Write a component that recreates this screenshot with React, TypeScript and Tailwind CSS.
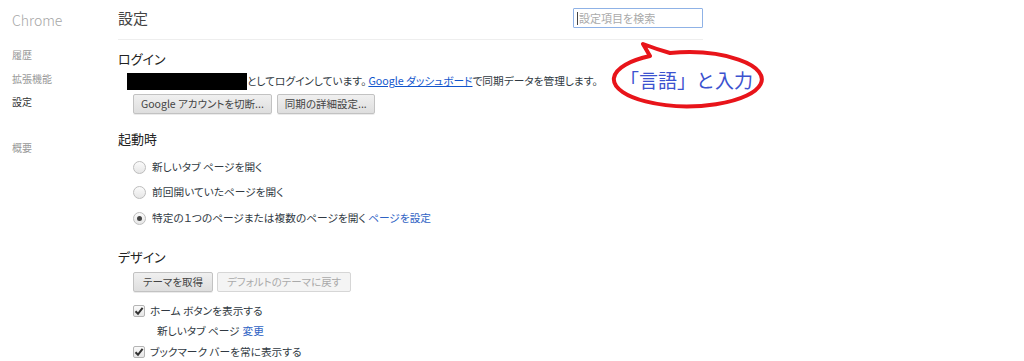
import React from 'react';

const jp = "font-['Noto_Sans_CJK_JP','Noto_Sans',sans-serif] [font-feature-settings:'palt']";

function Radio({ checked }: { checked?: boolean }) {
  return (
    <span className="w-[13px] h-[13px] rounded-full border border-[#bdbdbd] bg-gradient-to-b from-[#fbfbfb] to-[#e6e6e6] flex items-center justify-center shrink-0">
      {checked && <span className="w-[5px] h-[5px] rounded-full bg-[#444]" />}
    </span>
  );
}

function Check() {
  return (
    <span className="w-[12px] h-[12px] rounded-[2px] border border-[#b4b4b4] bg-gradient-to-b from-[#fafafa] to-[#e6e6e6] flex items-center justify-center shrink-0">
      <svg width="10" height="10" viewBox="0 0 10 10">
        <path d="M1.5 5.2 L4 7.8 L8.6 1.8" fill="none" stroke="#333" strokeWidth="2" />
      </svg>
    </span>
  );
}

function Btn({ children, disabled, tight }: { children: React.ReactNode; disabled?: boolean; tight?: boolean }) {
  const pad = tight ? 'px-[7px]' : 'px-[9px]';
  return (
    <button
      className={
        disabled
          ? `h-[20px] ${pad} border border-[#d6d6d6] rounded-[2px] bg-[#f4f4f4] text-[#aaa] text-[10.5px] leading-none`
          : `h-[20px] ${pad} border border-[#c2c2c2] rounded-[2px] bg-gradient-to-b from-[#f0f0f0] to-[#dedede] text-[#444] text-[10.5px] leading-none shadow-[0_1px_0_rgba(0,0,0,0.08)]`
      }
    >
      {children}
    </button>
  );
}

export default function App() {
  return (
    <div className={`relative w-[1024px] h-[361px] overflow-hidden bg-white text-[#303942] ${jp}`}>
      <div className="flex">
        {/* sidebar */}
        <div className="w-[118px] shrink-0 pl-[12px]">
          <div className="h-[40px] flex items-center text-[14px] text-[#a6a6a6] font-light">Chrome</div>
          <div className="text-[10px] text-[#999]">
            <div className="h-[20px] mt-[4px] flex items-center">履歴</div>
            <div className="h-[20px] mt-[4px] flex items-center">拡張機能</div>
            <div className="h-[20px] mt-[3px] flex items-center text-[#333]">設定</div>
            <div className="h-[20px] mt-[26px] flex items-center">概要</div>
          </div>
        </div>

        {/* main */}
        <div className="flex-1">
          <div className="w-[585px] h-[40px] border-b border-[#eee] flex items-center justify-between">
            <span className="text-[15px] text-[#444] -mt-[2px]">設定</span>
            <div className="w-[130px] h-[20px] mb-[3px] border border-[#8fb2e6] rounded-[1px] flex items-center pl-[3px] text-[11px] text-[#aaa]">
              <span className="w-px h-[13px] bg-[#444] mr-px" />
              設定項目を検索
            </div>
          </div>

          <div className="h-[20px] mt-[9px] flex items-center text-[13px] text-[#222]">ログイン</div>
          <div className="h-[18px] mt-[3px] flex items-center text-[10.7px]">
            <span className="ml-[9px] w-[120px] h-[17px] bg-black" />
            <span>としてログインしています。</span>
            <span className="text-[#1155cc] underline ml-[2px]">Google ダッシュボード</span>
            <span>で同期データを管理します。</span>
          </div>
          <div className="mt-[4px] ml-[15px] flex gap-[5px]">
            <Btn tight>Google アカウントを切断...</Btn>
            <Btn tight>同期の詳細設定...</Btn>
          </div>

          <div className="h-[20px] mt-[15px] flex items-center text-[13px] text-[#222]">起動時</div>
          <div className="mt-[6px] ml-[15px] text-[10.7px]">
            <div className="h-[25px] flex items-center gap-[6px]"><Radio /><span>新しいタブ ページを開く</span></div>
            <div className="h-[25px] flex items-center gap-[6px]"><Radio /><span>前回開いていたページを開く</span></div>
            <div className="h-[26px] flex items-center gap-[6px]">
              <Radio checked />
              <span>特定の１つのページまたは複数のページを開く <span className="text-[#2f63c4]">ページを設定</span></span>
            </div>
          </div>

          <div className="h-[20px] mt-[16px] flex items-center text-[13px] text-[#222]">デザイン</div>
          <div className="mt-[5px] ml-[15px] flex gap-[4px]">
            <Btn>テーマを取得</Btn>
            <Btn disabled>デフォルトのテーマに戻す</Btn>
          </div>
          <div className="mt-[9px] ml-[15px] text-[10.7px]">
            <div className="h-[20px] flex items-center gap-[5px]"><Check /><span>ホーム ボタンを表示する</span></div>
            <div className="h-[21px] flex items-center pl-[24px]">新しいタブ ページ <span className="text-[#2f63c4] ml-[3px]">変更</span></div>
            <div className="h-[20px] flex items-center gap-[5px]"><Check /><span>ブックマーク バーを常に表示する</span></div>
          </div>
        </div>
      </div>

      {/* annotation overlay */}
      <svg className="absolute left-0 top-0 pointer-events-none" width="1024" height="361">
        <path
          d="M650 56 L643 44 Q656 49 670 53 A74 27 0 1 1 650 56 Z"
          fill="none"
          stroke="#e8141a"
          strokeWidth="4"
          strokeLinejoin="round"
        />
      </svg>
      <div className="absolute left-[620px] top-[66px] text-[19px] leading-[28px] text-[#3b52cf] [font-feature-settings:normal]">「言語」と入力</div>
    </div>
  );
}
